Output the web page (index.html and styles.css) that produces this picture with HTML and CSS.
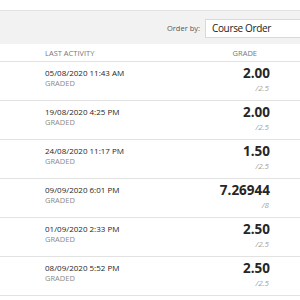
FILE: index.html
```html
<!DOCTYPE html>
<html>
<head>
<meta charset="utf-8">
<link rel="stylesheet" href="styles.css">
</head>
<body>
<div class="top"></div>
<div class="toolbar">
  <span class="order-label">Order by:</span>
  <div class="select">Course Order</div>
</div>
<div class="thead">
  <span class="col-act">LAST ACTIVITY</span>
  <span class="col-grade">GRADE</span>
</div>
<div class="row">
  <div class="act"><div class="date">05/08/2020 11:43 AM</div><div class="status">GRADED</div></div>
  <div class="grade"><div class="score">2.00</div><div class="max">/2.5</div></div>
</div>
<div class="row">
  <div class="act"><div class="date">19/08/2020 4:25 PM</div><div class="status">GRADED</div></div>
  <div class="grade"><div class="score">2.00</div><div class="max">/2.5</div></div>
</div>
<div class="row">
  <div class="act"><div class="date">24/08/2020 11:17 PM</div><div class="status">GRADED</div></div>
  <div class="grade"><div class="score">1.50</div><div class="max">/2.5</div></div>
</div>
<div class="row">
  <div class="act"><div class="date">09/09/2020 6:01 PM</div><div class="status">GRADED</div></div>
  <div class="grade"><div class="score">7.26944</div><div class="max">/8</div></div>
</div>
<div class="row">
  <div class="act"><div class="date">01/09/2020 2:33 PM</div><div class="status">GRADED</div></div>
  <div class="grade"><div class="score">2.50</div><div class="max">/2.5</div></div>
</div>
<div class="row">
  <div class="act"><div class="date">08/09/2020 5:52 PM</div><div class="status">GRADED</div></div>
  <div class="grade"><div class="score">2.50</div><div class="max">/2.5</div></div>
</div>
</body>
</html>
```
FILE: styles.css
```css
html, body {
  margin: 0;
  padding: 0;
  background: #fff;
  font-family: "Open Sans", "Liberation Sans", sans-serif;
  color: #262626;
  overflow: hidden;
  width: 300px;
  height: 300px;
}
.top {
  height: 10px;
  background: #fff;
  border-bottom: 1px solid #e2e2e2;
}
.toolbar {
  height: 33px;
  background: #f2f2f2;
  display: flex;
  align-items: center;
  justify-content: flex-end;
  gap: 5px;
}
.order-label {
  font-size: 7.5px;
  color: #555;
}
.select {
  width: 95px;
  height: 19px;
  box-sizing: border-box;
  background: #fff;
  border: 1px solid #d9d9d9;
  border-right: none;
  font-size: 10px;
  letter-spacing: -0.35px;
  line-height: 17px;
  padding-left: 6px;
  margin-top: 2px;
  color: #222;
}
.thead {
  height: 17px;
  display: flex;
  align-items: center;
  border-bottom: 1px solid #e2e2e2;
  font-size: 7.5px;
  color: #777;
}
.col-act {
  margin-left: 45px;
}
.col-grade {
  margin-left: auto;
  margin-right: 43px;
}
.row {
  height: 38px;
  border-bottom: 1px solid #e2e2e2;
  display: flex;
  justify-content: space-between;
}
.act {
  margin-left: 45px;
  padding-top: 5px;
}
.date {
  font-size: 8px;
  line-height: 11px;
  color: #262626;
}
.status {
  font-size: 7.5px;
  line-height: 10px;
  color: #8a8a8a;
}
.grade {
  margin-right: 30px;
  text-align: right;
  padding-top: 4px;
}
.score {
  font-size: 13.5px;
  font-weight: 700;
  line-height: 15px;
  color: #262626;
}
.max {
  font-size: 8px;
  line-height: 9px;
  margin-top: 2px;
  margin-right: 1px;
  color: #a0a0a0;
  font-style: italic;
}
```
